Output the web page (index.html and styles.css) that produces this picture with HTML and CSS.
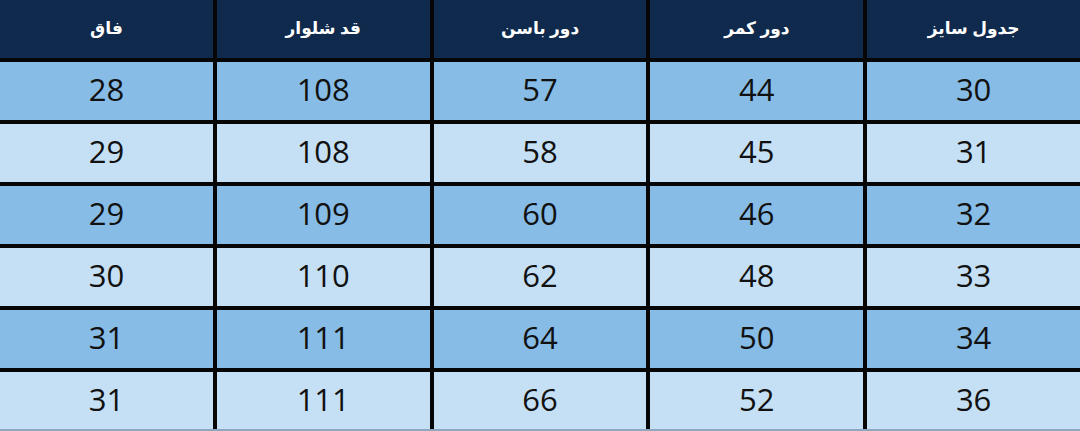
FILE: index.html
```html
<!DOCTYPE html>
<html lang="fa" dir="rtl">
<head>
<meta charset="utf-8">
<title>جدول سایز</title>
<link rel="stylesheet" href="styles.css">
</head>
<body>
<div class="table">
  <div class="cell head">جدول سایز</div>
  <div class="cell head">دور کمر</div>
  <div class="cell head">دور باسن</div>
  <div class="cell head">قد شلوار</div>
  <div class="cell head">فاق</div>

  <div class="cell dark">30</div><div class="cell dark">44</div><div class="cell dark">57</div><div class="cell dark">108</div><div class="cell dark">28</div>
  <div class="cell light">31</div><div class="cell light">45</div><div class="cell light">58</div><div class="cell light">108</div><div class="cell light">29</div>
  <div class="cell dark">32</div><div class="cell dark">46</div><div class="cell dark">60</div><div class="cell dark">109</div><div class="cell dark">29</div>
  <div class="cell light">33</div><div class="cell light">48</div><div class="cell light">62</div><div class="cell light">110</div><div class="cell light">30</div>
  <div class="cell dark">34</div><div class="cell dark">50</div><div class="cell dark">64</div><div class="cell dark">111</div><div class="cell dark">31</div>
  <div class="cell light">36</div><div class="cell light">52</div><div class="cell light">66</div><div class="cell light">111</div><div class="cell light">31</div>
</div>
</body>
</html>
```

FILE: styles.css
```css
html, body {
  margin: 0;
  padding: 0;
  background: #c5e0f5;
}

.table {
  width: 1080px;
  height: 431px;
  box-sizing: border-box;
  display: grid;
  grid-template-columns: repeat(5, 1fr);
  grid-template-rows: 58px repeat(5, 58px) 57px;
  column-gap: 4px;
  row-gap: 4px;
  background: #060606;
  border-bottom: 2px solid #8ea8c2;
}

.cell {
  display: flex;
  align-items: center;
  justify-content: center;
  font-family: "Open Sans", "DejaVu Sans", sans-serif;
}

.head {
  background: #0f2a4c;
  color: #ffffff;
  font-weight: bold;
  font-size: 17px;
  padding-bottom: 3px;
}

.dark,
.light {
  font-size: 31px;
  color: #111111;
  padding-bottom: 4px;
}

.dark {
  background: #86bce6;
}

.light {
  background: #c5e0f5;
}
```
